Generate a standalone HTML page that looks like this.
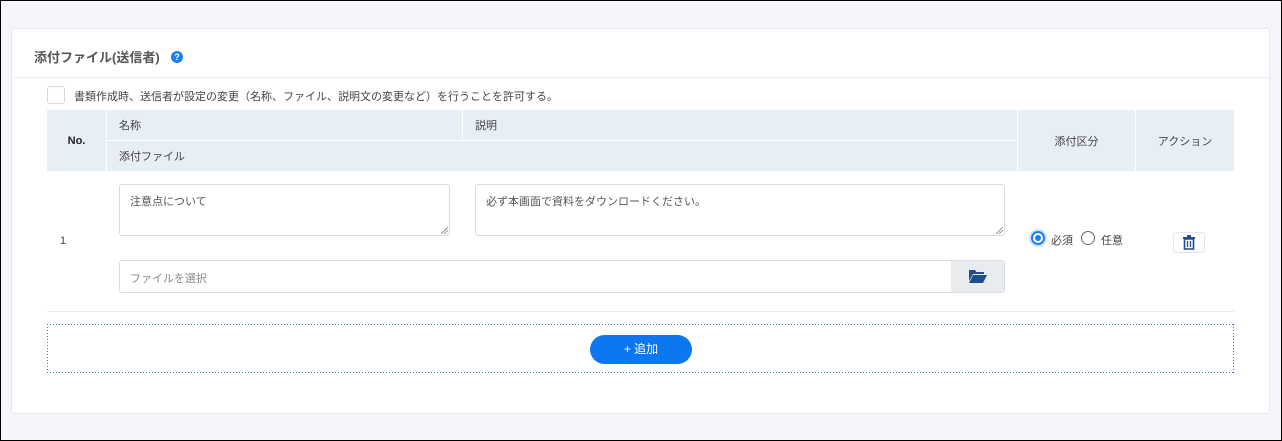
<!DOCTYPE html>
<html><head><meta charset="utf-8"><style>
*{box-sizing:border-box;margin:0;padding:0}
body{width:1282px;height:441px;background:#f5f6f9;position:relative;font-family:"Liberation Sans","Noto Sans CJK JP",sans-serif;font-size:11px;color:#444;overflow:hidden}
.a{position:absolute}
.card{left:11px;top:28px;width:1259px;height:386px;background:#fff;border:1px solid #e6e8ec;border-radius:3px}
.th{background:#e8eef6;position:absolute;display:flex;align-items:center}
.ta{position:absolute;border:1px solid #d9dce1;border-radius:3px;background:#fff;padding:8px 10px;color:#555;font-size:11px}
.dh{position:absolute;height:1px;background:repeating-linear-gradient(90deg,#2f7be6 0 1px,transparent 1px 3px)}
.dv{position:absolute;width:1px;background:repeating-linear-gradient(180deg,#2f7be6 0 1px,transparent 1px 3px)}
</style></head><body>
<div class="a" style="left:0;top:0;width:1282px;height:441px;border:1px solid #000;z-index:9"></div>
<div class="a card"></div>
<div class="a" style="left:34px;top:47px;font-size:13px;font-weight:bold;color:#555">添付ファイル(送信者)</div>
<div class="a" style="left:171px;top:51px;width:12px;height:12px;border-radius:50%;background:#1a7ff0;color:#fff;font-size:9px;text-align:center;line-height:12px;font-weight:bold">?</div>
<div class="a" style="left:12px;top:77px;width:1257px;height:1px;background:#eceef1"></div>
<div class="a" style="left:47px;top:86px;width:18px;height:18px;border:1px solid #d6d9de;border-radius:3px"></div>
<div class="a" style="left:74px;top:88px;color:#444">書類作成時、送信者が設定の変更（名称、ファイル、説明文の変更など）を行うことを許可する。</div>
<div class="th" style="left:47px;top:110px;width:59px;height:61px;justify-content:center;font-weight:bold;color:#222">No.</div>
<div class="th" style="left:107px;top:110px;width:355px;height:30px;padding-left:12px">名称</div>
<div class="th" style="left:463px;top:110px;width:554px;height:30px;padding-left:12px">説明</div>
<div class="th" style="left:107px;top:141px;width:910px;height:30px;padding-left:12px">添付ファイル</div>
<div class="th" style="left:1018px;top:110px;width:117px;height:61px;justify-content:center">添付区分</div>
<div class="th" style="left:1136px;top:110px;width:98px;height:61px;justify-content:center">アクション</div>
<div class="a" style="left:60px;top:235px">1</div>
<div class="ta" style="left:119px;top:184px;width:331px;height:52px">注意点について</div>
<div class="ta" style="left:475px;top:184px;width:530px;height:52px">必ず本画面で資料をダウンロードください。</div>
<svg class="a" style="left:441px;top:227px" width="7" height="7"><path d="M0 7L7 0M3 7L7 3" stroke="#888" stroke-width="0.8"/></svg>
<svg class="a" style="left:996px;top:227px" width="7" height="7"><path d="M0 7L7 0M3 7L7 3" stroke="#888" stroke-width="0.8"/></svg>
<div class="ta" style="left:119px;top:260px;width:886px;height:33px;color:#888;padding-top:9px">ファイルを選択</div>
<div class="a" style="left:951px;top:261px;width:53px;height:31px;background:#e9ecef;border-radius:0 3px 3px 0"></div>
<svg class="a" style="left:969px;top:269px" width="18" height="14" viewBox="0 0 18 14"><path d="M0 1h6l1.5 2H15v2H4L0 12z" fill="#1f4e8c"/><path d="M4 6h14l-4 8H0z" fill="#1f4e8c"/></svg>
<div class="a" style="left:1031px;top:231px;width:14px;height:14px;border-radius:50%;border:2px solid #1a7ff0;box-shadow:0 0 0 2px #cfe3fc"></div>
<div class="a" style="left:1035px;top:235px;width:6px;height:6px;border-radius:50%;background:#1a7ff0"></div>
<div class="a" style="left:1051px;top:232px">必須</div>
<div class="a" style="left:1081px;top:231px;width:14px;height:14px;border-radius:50%;border:1px solid #666"></div>
<div class="a" style="left:1101px;top:232px">任意</div>
<div class="a" style="left:1173px;top:232px;width:32px;height:21px;border:1px solid #e2e5e9;border-radius:3px"></div>
<svg class="a" style="left:1183px;top:235px" width="12" height="15" viewBox="0 0 12 15"><path d="M0 2h12v2H0zM4 0h4v2H4z" fill="#1f4e8c"/><path d="M1.5 4h9v10h-9z" fill="none" stroke="#1f4e8c" stroke-width="1.6"/><path d="M4.5 6v6M7.5 6v6" stroke="#1f4e8c" stroke-width="1.3"/></svg>
<div class="a" style="left:47px;top:311px;width:1187px;height:1px;background:#e8eaed"></div>
<div class="dh" style="left:47px;top:324px;width:1187px"></div>
<div class="dh" style="left:47px;top:372px;width:1187px"></div>
<div class="dv" style="left:47px;top:324px;height:49px"></div>
<div class="dv" style="left:1233px;top:324px;height:49px"></div>
<div class="a" style="left:590px;top:335px;width:102px;height:29px;border-radius:15px;background:#0d77f2;color:#fff;text-align:center;line-height:29px;font-size:12px">+ 追加</div>
</body></html>
